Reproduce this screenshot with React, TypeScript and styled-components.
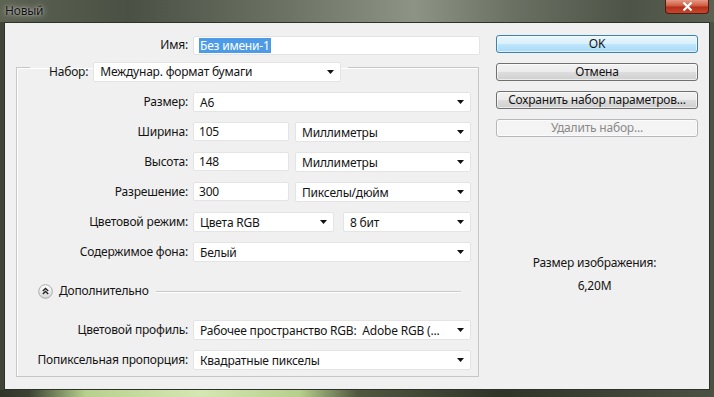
import styled, { createGlobalStyle } from "styled-components";

const GlobalStyle = createGlobalStyle`
  html, body {
    margin: 0;
    padding: 0;
  }
  body {
    width: 714px;
    height: 397px;
    overflow: hidden;
    font-family: "Noto Sans", "Liberation Sans", sans-serif;
    font-size: 12px;
    letter-spacing: -0.2px;
    color: #141414;
  }
`;

function Arrow() {
  return (
    <svg width="7" height="4" viewBox="0 0 7 4">
      <polygon points="0,0 7,0 3.5,4" fill="#111" />
    </svg>
  );
}

function CollapseIcon() {
  return (
    <svg width="15" height="15" viewBox="0 0 15 15">
      <defs>
        <linearGradient id="cg" x1="0" y1="0" x2="0" y2="1">
          <stop offset="0" stopColor="#ffffff" />
          <stop offset="1" stopColor="#d6d6d6" />
        </linearGradient>
      </defs>
      <circle cx="7.5" cy="7.5" r="6.8" fill="url(#cg)" stroke="#a9a9a9" />
      <polyline points="4.8,7 7.5,4.5 10.2,7" fill="none" stroke="#222" strokeWidth="1.3" />
      <polyline points="4.8,10 7.5,7.5 10.2,10" fill="none" stroke="#222" strokeWidth="1.3" />
    </svg>
  );
}

type SelectProps = { value: string; width?: number };

function Select({ value, width }: SelectProps) {
  return (
    <SelectBox $width={width}>
      <span>{value}</span>
      <Arrow />
    </SelectBox>
  );
}

export default function App() {
  return (
    <>
      <GlobalStyle />
      <Window>
        <TitleBar>
          <Title>Новый</Title>
          <CloseButton>
            <svg width="11" height="9" viewBox="0 0 11 9">
              <path d="M1.5 0.5 L9.5 8.5 M9.5 0.5 L1.5 8.5" stroke="#fff" strokeWidth="2.2" />
            </svg>
          </CloseButton>
        </TitleBar>
        <Client>
          <LeftColumn>
            <Row $labelWidth={183}>
              <Label>Имя:</Label>
              <TextField>
                <Selected>Без имени-1</Selected>
              </TextField>
            </Row>
            <Group>
              <Legend>
                <LegendRow>
                  <Label>Набор:</Label>
                  <Select value="Междунар. формат бумаги" width={248} />
                </LegendRow>
              </Legend>
              <Rows>
                <Row $labelWidth={171}>
                  <Label>Размер:</Label>
                  <Select value="A6" />
                </Row>
                <Row $labelWidth={171}>
                  <Label>Ширина:</Label>
                  <Pair $first={96} $gap={6}>
                    <TextField>105</TextField>
                    <Select value="Миллиметры" />
                  </Pair>
                </Row>
                <Row $labelWidth={171}>
                  <Label>Высота:</Label>
                  <Pair $first={96} $gap={6}>
                    <TextField>148</TextField>
                    <Select value="Миллиметры" />
                  </Pair>
                </Row>
                <Row $labelWidth={171}>
                  <Label>Разрешение:</Label>
                  <Pair $first={96} $gap={6}>
                    <TextField>300</TextField>
                    <Select value="Пикселы/дюйм" />
                  </Pair>
                </Row>
                <Row $labelWidth={171}>
                  <Label>Цветовой режим:</Label>
                  <Pair $first={141} $gap={9}>
                    <Select value="Цвета RGB" />
                    <Select value="8 бит" />
                  </Pair>
                </Row>
                <Row $labelWidth={171}>
                  <Label>Содержимое фона:</Label>
                  <Select value="Белый" />
                </Row>
              </Rows>
              <Advanced>
                <CollapseIcon />
                <span>Дополнительно</span>
                <Rule />
              </Advanced>
              <Rows>
                <Row $labelWidth={171}>
                  <Label>Цветовой профиль:</Label>
                  <Select value="Рабочее пространство RGB:  Adobe RGB (..." />
                </Row>
                <Row $labelWidth={171}>
                  <Label>Попиксельная пропорция:</Label>
                  <Select value="Квадратные пикселы" />
                </Row>
              </Rows>
            </Group>
          </LeftColumn>
          <RightColumn>
            <Button $variant="default">OK</Button>
            <Button>Отмена</Button>
            <Button>Сохранить набор параметров...</Button>
            <Button $variant="disabled">Удалить набор...</Button>
            <SizeInfo>
              <div>Размер изображения:</div>
              <div>6,20M</div>
            </SizeInfo>
          </RightColumn>
        </Client>
        <BottomEdge />
      </Window>
    </>
  );
}

const Window = styled.div`
  width: 714px;
  height: 397px;
  display: flex;
  flex-direction: column;
  background: linear-gradient(90deg, #3e4537 0%, #555c4b 40%, #4b5243 100%);
`;

const TitleBar = styled.div`
  height: 22px;
  display: flex;
  justify-content: space-between;
  align-items: flex-start;
  padding-left: 5px;
  background: linear-gradient(
    90deg,
    #5d6353 0%,
    #4a5043 18%,
    #6c7264 40%,
    #8d9385 58%,
    #6a7062 72%,
    #4d5346 88%,
    #5b6152 100%
  );
`;

const Title = styled.div`
  margin-top: 3px;
  line-height: 16px;
  color: #111;
  text-shadow: 0 0 6px rgba(255, 255, 255, 0.7), 0 0 2px rgba(255, 255, 255, 0.5);
`;

const CloseButton = styled.div`
  width: 44px;
  height: 14px;
  margin-right: 5px;
  display: flex;
  align-items: center;
  justify-content: center;
  box-sizing: border-box;
  border: 1px solid #4f1b12;
  border-top: none;
  border-radius: 0 0 4px 4px;
  background: linear-gradient(#e59a86, #cf5a40 45%, #b3301b 55%, #c9462d);
`;

const Client = styled.div`
  margin: 0 4px;
  height: 368px;
  box-sizing: border-box;
  border: 1px solid #2d3228;
  background: #f0f0f0;
  display: flex;
`;

const BottomEdge = styled.div`
  flex: 1;
  background: linear-gradient(
    90deg,
    #2e3428 0%,
    #3a4133 4%,
    #b7d08d 12%,
    #d5e7b3 28%,
    #b6cf8c 42%,
    #50573f 50%,
    #2f3429 70%,
    #4a5043 100%
  );
`;

const LeftColumn = styled.div`
  width: 475px;
  padding-top: 12px;
`;

const Row = styled.div<{ $labelWidth: number }>`
  display: grid;
  grid-template-columns: ${(p) => p.$labelWidth}px 1fr;
  column-gap: 5px;
  align-items: center;
  height: 20px;
`;

const Label = styled.div`
  text-align: right;
  white-space: nowrap;
  line-height: 16px;
`;

const TextField = styled.div`
  height: 19px;
  box-sizing: border-box;
  display: flex;
  align-items: center;
  padding: 0 5px;
  background: #fff;
  border: 1px solid #e4e4e4;
  border-radius: 2px;
`;

const Selected = styled.span`
  background: #4d9be6;
  color: #fff;
  padding: 0 1px;
  line-height: 15px;
`;

const SelectBox = styled.div<{ $width?: number }>`
  width: ${(p) => (p.$width ? `${p.$width}px` : "auto")};
  height: 20px;
  box-sizing: border-box;
  display: flex;
  align-items: center;
  justify-content: space-between;
  padding: 0 6px 0 6px;
  background: #fff;
  border: 1px solid #e4e4e4;
  border-radius: 2px;
  white-space: pre;

  svg {
    flex: none;
    margin-left: 4px;
  }
`;

const Pair = styled.div<{ $first: number; $gap: number }>`
  display: grid;
  grid-template-columns: ${(p) => p.$first}px 1fr;
  column-gap: ${(p) => p.$gap}px;
`;

const Group = styled.fieldset`
  margin: -3px 0 0 11px;
  width: 463px;
  box-sizing: border-box;
  padding: 10px 7px 6px 0;
  border: 1px solid #c7c7c7;
  box-shadow: inset 1px 1px 0 #fff;
  min-width: 0;
`;

const Legend = styled.legend`
  margin-left: 13px;
  padding: 9px 7px 0 19px;
`;

const LegendRow = styled.div`
  display: flex;
  align-items: center;
  gap: 5px;
  height: 21px;
`;

const Rows = styled.div`
  display: flex;
  flex-direction: column;
  gap: 10px;
`;

const Advanced = styled.div`
  display: flex;
  align-items: center;
  gap: 6px;
  height: 20px;
  margin: 19px 10px 19px 21px;
  line-height: 16px;
`;

const Rule = styled.div`
  flex: 1;
  height: 1px;
  margin-left: 1px;
  background: #c9c9c9;
  box-shadow: 0 1px 0 #fff;
`;

const RightColumn = styled.div`
  width: 202px;
  margin-left: 16px;
  padding-top: 12px;
  display: flex;
  flex-direction: column;
  gap: 10px;
`;

const Button = styled.button<{ $variant?: "default" | "disabled" }>`
  height: 18px;
  padding: 0;
  box-sizing: border-box;
  font-family: inherit;
  font-size: 12px;
  letter-spacing: inherit;
  line-height: 14px;
  border-radius: 3px;
  border: 1px solid
    ${(p) =>
      p.$variant === "default" ? "#3c7fb1" : p.$variant === "disabled" ? "#b5b8ba" : "#707070"};
  color: ${(p) => (p.$variant === "disabled" ? "#8a8a8a" : "#141414")};
  background: ${(p) =>
    p.$variant === "default"
      ? "linear-gradient(#eaf6fd, #d9f0fc 50%, #bee6fd 51%, #a7d9f5)"
      : p.$variant === "disabled"
        ? "#f4f4f4"
        : "linear-gradient(#f2f2f2, #ebebeb 50%, #dddddd 51%, #cfcfcf)"};
  box-shadow: inset 0 0 0 1px rgba(255, 255, 255, 0.6);
`;

const SizeInfo = styled.div`
  margin-top: 108px;
  padding-right: 5px;
  display: flex;
  flex-direction: column;
  align-items: center;
  gap: 7px;
  line-height: 16px;
`;
